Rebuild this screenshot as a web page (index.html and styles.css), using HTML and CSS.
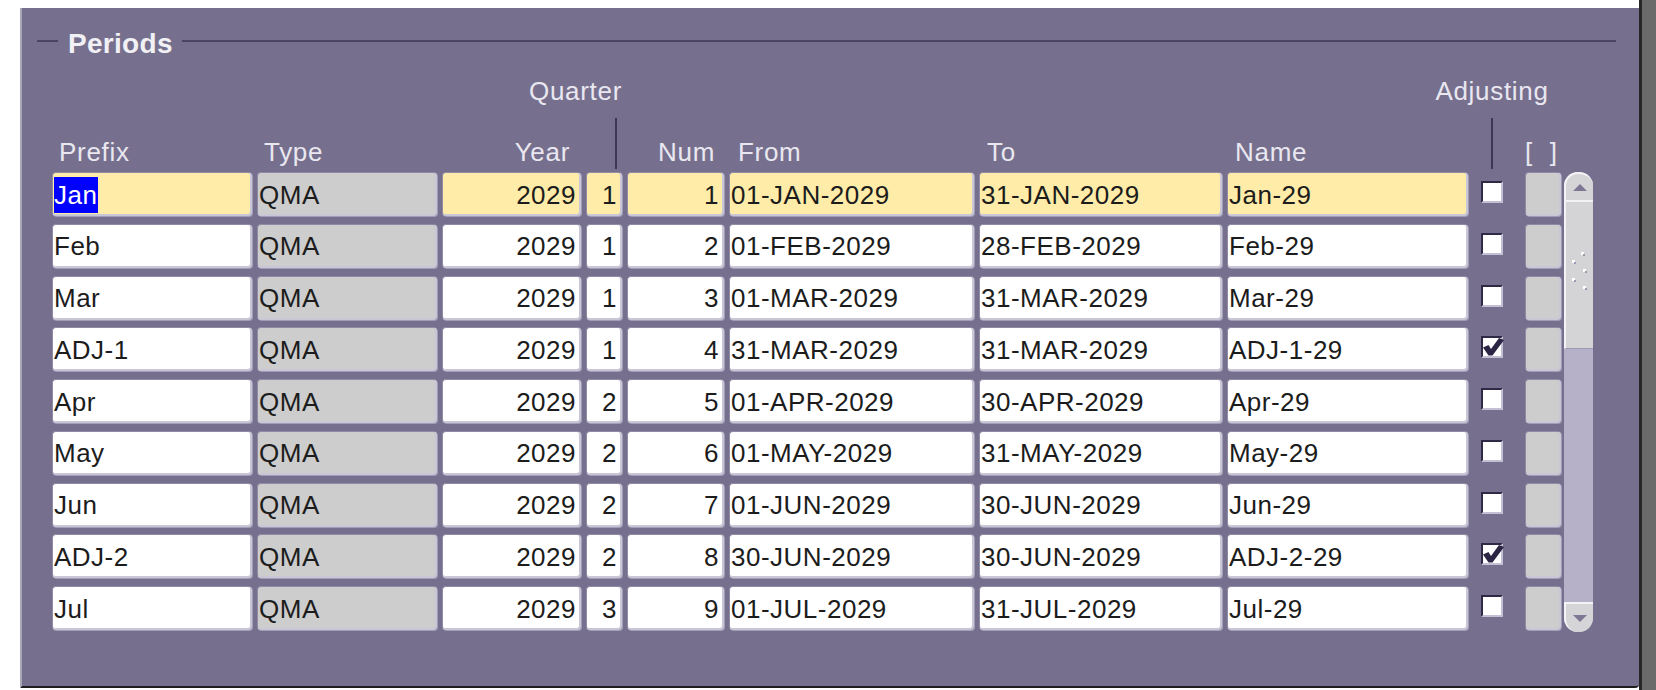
FILE: index.html
```html
<!DOCTYPE html>
<html>
<head>
<meta charset="utf-8">
<title>Periods</title>
<link rel="stylesheet" href="styles.css">
</head>
<body>
<div class="screen">
  <div class="main">
    <div class="panel">
      <div class="legend">
        <span class="dash"></span>
        <span class="legend-title">Periods</span>
        <span class="rule"></span>
      </div>
      <div class="block">
        <div class="table">
          <div class="cols head">
            <div class="sup sup-q"><span>Quarter</span></div>
            <div class="sup sup-a"><span>Adjusting</span></div>
            <div class="lbl h1">Prefix</div>
            <div class="lbl h2">Type</div>
            <div class="lbl h3 r">Year</div>
            <div class="vl vl-q"><span class="vline"></span></div>
            <div class="lbl h5 r">Num</div>
            <div class="lbl h6">From</div>
            <div class="lbl h7">To</div>
            <div class="lbl h8">Name</div>
            <div class="vl vl-a"><span class="vline"></span></div>
            <div class="lbl h10">[&nbsp;&nbsp;]</div>
          </div>
          <div class="rows">
            <div class="cols row cur">
              <div class="f y"><span class="sel">Jan</span></div>
              <div class="f g">QMA</div>
              <div class="f y r">2029</div>
              <div class="f y r">1</div>
              <div class="f y r">1</div>
              <div class="f y">01-JAN-2029</div>
              <div class="f y">31-JAN-2029</div>
              <div class="f y">Jan-29</div>
              <div class="chk"><span class="cb"></span></div>
              <div class="f g"></div>
            </div>
            <div class="cols row">
              <div class="f">Feb</div>
              <div class="f g">QMA</div>
              <div class="f r">2029</div>
              <div class="f r">1</div>
              <div class="f r">2</div>
              <div class="f">01-FEB-2029</div>
              <div class="f">28-FEB-2029</div>
              <div class="f">Feb-29</div>
              <div class="chk"><span class="cb"></span></div>
              <div class="f g"></div>
            </div>
            <div class="cols row">
              <div class="f">Mar</div>
              <div class="f g">QMA</div>
              <div class="f r">2029</div>
              <div class="f r">1</div>
              <div class="f r">3</div>
              <div class="f">01-MAR-2029</div>
              <div class="f">31-MAR-2029</div>
              <div class="f">Mar-29</div>
              <div class="chk"><span class="cb"></span></div>
              <div class="f g"></div>
            </div>
            <div class="cols row">
              <div class="f">ADJ-1</div>
              <div class="f g">QMA</div>
              <div class="f r">2029</div>
              <div class="f r">1</div>
              <div class="f r">4</div>
              <div class="f">31-MAR-2029</div>
              <div class="f">31-MAR-2029</div>
              <div class="f">ADJ-1-29</div>
              <div class="chk"><span class="cb"><svg class="tick" viewBox="0 0 22 20" width="22" height="20"><path d="M1 10.5 L6.5 8 L9 12 L17 1 L22 3 L10.5 18.5 L6.5 18.5 Z" fill="#2b2543"/></svg></span></div>
              <div class="f g"></div>
            </div>
            <div class="cols row">
              <div class="f">Apr</div>
              <div class="f g">QMA</div>
              <div class="f r">2029</div>
              <div class="f r">2</div>
              <div class="f r">5</div>
              <div class="f">01-APR-2029</div>
              <div class="f">30-APR-2029</div>
              <div class="f">Apr-29</div>
              <div class="chk"><span class="cb"></span></div>
              <div class="f g"></div>
            </div>
            <div class="cols row">
              <div class="f">May</div>
              <div class="f g">QMA</div>
              <div class="f r">2029</div>
              <div class="f r">2</div>
              <div class="f r">6</div>
              <div class="f">01-MAY-2029</div>
              <div class="f">31-MAY-2029</div>
              <div class="f">May-29</div>
              <div class="chk"><span class="cb"></span></div>
              <div class="f g"></div>
            </div>
            <div class="cols row">
              <div class="f">Jun</div>
              <div class="f g">QMA</div>
              <div class="f r">2029</div>
              <div class="f r">2</div>
              <div class="f r">7</div>
              <div class="f">01-JUN-2029</div>
              <div class="f">30-JUN-2029</div>
              <div class="f">Jun-29</div>
              <div class="chk"><span class="cb"></span></div>
              <div class="f g"></div>
            </div>
            <div class="cols row">
              <div class="f">ADJ-2</div>
              <div class="f g">QMA</div>
              <div class="f r">2029</div>
              <div class="f r">2</div>
              <div class="f r">8</div>
              <div class="f">30-JUN-2029</div>
              <div class="f">30-JUN-2029</div>
              <div class="f">ADJ-2-29</div>
              <div class="chk"><span class="cb"><svg class="tick" viewBox="0 0 22 20" width="22" height="20"><path d="M1 10.5 L6.5 8 L9 12 L17 1 L22 3 L10.5 18.5 L6.5 18.5 Z" fill="#2b2543"/></svg></span></div>
              <div class="f g"></div>
            </div>
            <div class="cols row">
              <div class="f">Jul</div>
              <div class="f g">QMA</div>
              <div class="f r">2029</div>
              <div class="f r">3</div>
              <div class="f r">9</div>
              <div class="f">01-JUL-2029</div>
              <div class="f">31-JUL-2029</div>
              <div class="f">Jul-29</div>
              <div class="chk"><span class="cb"></span></div>
              <div class="f g"></div>
            </div>
          </div>
        </div>
        <div class="scroll">
          <div class="sb-up"><span class="tri-up"></span></div>
          <div class="sb-thumb">
            <svg class="grip" viewBox="0 0 29 60" width="29" height="60">
              <rect x="17" y="0" width="3" height="3" fill="#ffffff"/><rect x="19" y="2" width="2" height="2" fill="#9d98b0"/>
              <rect x="8" y="8" width="3" height="3" fill="#ffffff"/><rect x="10" y="10" width="2" height="2" fill="#9d98b0"/>
              <rect x="19" y="17" width="3" height="3" fill="#ffffff"/><rect x="21" y="19" width="2" height="2" fill="#9d98b0"/>
              <rect x="8" y="26" width="3" height="3" fill="#ffffff"/><rect x="10" y="28" width="2" height="2" fill="#9d98b0"/>
              <rect x="19" y="34" width="3" height="3" fill="#ffffff"/><rect x="21" y="36" width="2" height="2" fill="#9d98b0"/>
            </svg>
          </div>
          <div class="sb-track"></div>
          <div class="sb-down"><span class="tri-down"></span></div>
        </div>
      </div>
    </div>
  </div>
  <div class="edge"></div>
</div>
</body>
</html>
```
FILE: styles.css
```css
* { box-sizing: border-box; }
html, body { margin: 0; padding: 0; }
body {
  width: 1656px;
  height: 690px;
  overflow: hidden;
  background: #ffffff;
  font-family: "Liberation Sans", Arial, sans-serif;
}
.screen { display: flex; height: 690px; }
.main { flex: 1; padding: 8px 0 0 20px; }
.edge {
  width: 17px;
  border-left: 3px solid #262626;
  background: #6a6a6a;
}
.panel {
  height: 680px;
  background: #76708e;
  border-left: 2px solid #aaa7b8;
  border-bottom: 2px solid #1e1e1e;
  border-bottom-right-radius: 4px;
  padding-top: 18px;
}

/* legend */
.legend {
  display: flex;
  align-items: center;
  height: 30px;
  margin: 0 23px 0 15px;
}
.dash { width: 21px; height: 2px; background: #4a4465; }
.rule { flex: 1; height: 2px; background: #4a4465; }
.legend-title {
  margin: 0 9px 0 10px;
  padding-top: 6px;
  font-weight: bold;
  font-size: 28px;
  line-height: 30px;
  letter-spacing: 0.3px;
  color: #f1f0f4;
}

/* table block */
.block {
  display: flex;
  align-items: flex-start;
  margin-top: 22px;
  padding-left: 30px;
}
.cols {
  display: grid;
  grid-template-columns: 200px 180px 139px 36px 97px 245px 243px 241px 47px 36px;
  column-gap: 5px;
}
.head { grid-template-rows: 30px 62px; }

.sup, .lbl {
  font-size: 26px;
  line-height: 30px;
  color: #e9e7f0;
  letter-spacing: 0.7px;
  white-space: nowrap;
}
.sup { grid-row: 1; display: flex; margin-top: -2px; }
.sup-q { grid-column: 4; justify-content: flex-end; }
.sup-a { grid-column: 9; justify-content: center; padding-right: 9px; }

.lbl { grid-row: 2; align-self: end; padding-bottom: 3px; }
.h1 { grid-column: 1; padding-left: 7px; }
.h2 { grid-column: 2; padding-left: 7px; }
.h3 { grid-column: 3; padding-right: 11px; }
.h5 { grid-column: 5; padding-right: 9px; }
.h6 { grid-column: 6; padding-left: 9px; }
.h7 { grid-column: 7; padding-left: 8px; }
.h8 { grid-column: 8; padding-left: 8px; }
.h10 { grid-column: 10; white-space: pre; letter-spacing: 1px; }
.lbl.r { text-align: right; }

.vl { grid-row: 2; display: flex; align-self: end; margin-bottom: 1px; }
.vl-q { grid-column: 4; justify-content: flex-end; padding-right: 5px; }
.vl-a { grid-column: 9; justify-content: center; padding-right: 9px; }
.vline { width: 2px; height: 51px; background: #3e3858; }

/* rows */
.rows {
  display: flex;
  flex-direction: column;
  gap: 7.75px;
  margin-top: 2px;
}
.row { height: 44px; }
.f {
  height: 44px;
  display: flex;
  align-items: center;
  padding: 3px 3px 0 1px;
  background: #ffffff;
  border-top: 1px solid #8f8ba5;
  border-left: 1px solid #8f8ba5;
  border-right: 2px solid #c9c6d6;
  border-bottom: 2px solid #c9c6d6;
  border-radius: 4px;
  box-shadow: 1px 1px 0 #a19db6;
  font-size: 26px;
  letter-spacing: 0.5px;
  color: #1c1c1c;
  white-space: nowrap;
  overflow: hidden;
}
.f.r { justify-content: flex-end; }
.f.y { background: #ffeca8; }
.f.g { background: #cdcdcd; }
.sel {
  background: #0000ff;
  color: #ffffff;
  line-height: 36px;
  padding-right: 1px;
}

.chk { display: flex; align-items: flex-start; }
.cb {
  position: relative;
  margin: 9px 0 0 8px;
  width: 22px;
  height: 22px;
  background: #ffffff;
  border-top: 2px solid #2f2946;
  border-left: 2px solid #2f2946;
  border-right: 2px solid #c3bfd4;
  border-bottom: 2px solid #c3bfd4;
}
.tick { position: absolute; left: -1px; top: -1px; overflow: visible; }

/* scrollbar */
.scroll {
  margin: 94px 0 0 3px;
  width: 29px;
  height: 460px;
  display: flex;
  flex-direction: column;
  background: #b6b1c9;
  border-radius: 14px;
}
.sb-up {
  height: 30px;
  background: #d5d5d7;
  border-radius: 14px 14px 0 0;
  border-top: 2px solid #f4f4f6;
  border-left: 2px solid #f4f4f6;
  border-bottom: 2px solid #f2f2f4;
  display: flex;
  justify-content: center;
  align-items: center;
}
.sb-thumb {
  height: 147px;
  background: #d4d4d6;
  border-left: 2px solid #f3f3f5;
  border-bottom: 1px solid #9e99b2;
  padding-top: 50px;
}
.grip { display: block; margin-left: -2px; }
.sb-track { flex: 1; }
.sb-down {
  height: 30px;
  background: #d5d5d7;
  border-radius: 0 0 14px 14px;
  border-top: 2px solid #f4f4f6;
  border-left: 2px solid #f4f4f6;
  display: flex;
  justify-content: center;
  align-items: center;
}
.tri-up, .tri-down {
  width: 0;
  height: 0;
  border-left: 7px solid transparent;
  border-right: 7px solid transparent;
}
.tri-up { border-bottom: 7px solid #7e7894; }
.tri-down { border-top: 7px solid #7e7894; }
```
